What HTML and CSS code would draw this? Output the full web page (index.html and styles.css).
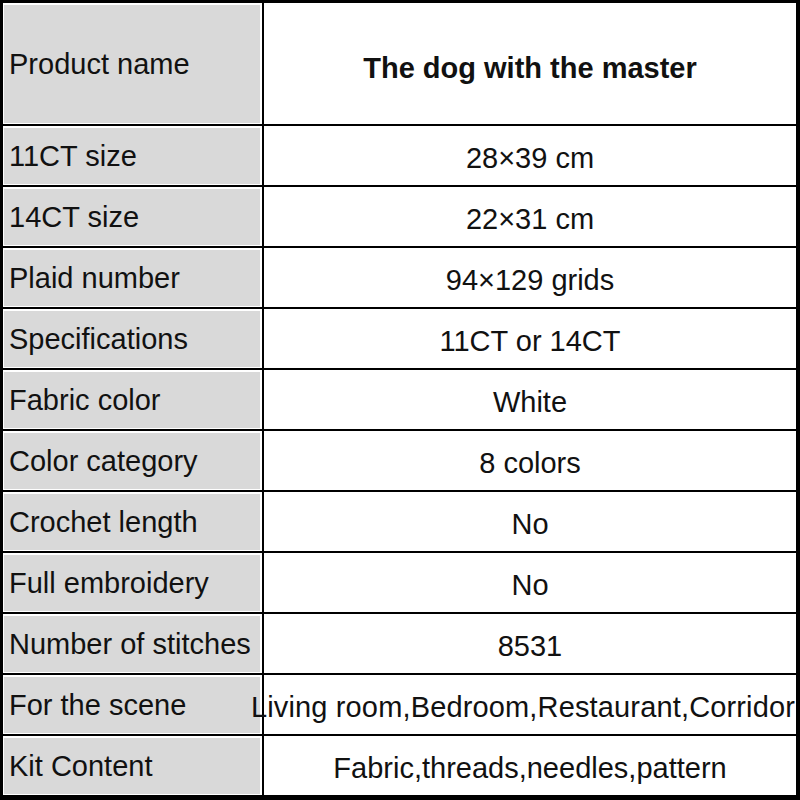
FILE: index.html
```html
<!DOCTYPE html>
<html>
<head>
<meta charset="utf-8">
<link rel="stylesheet" href="styles.css">
</head>
<body>
<div class="table">
  <div class="label">Product name</div><div class="value title">The dog with the master</div>
  <div class="label">11CT size</div><div class="value">28×39 cm</div>
  <div class="label">14CT size</div><div class="value">22×31 cm</div>
  <div class="label">Plaid number</div><div class="value">94×129 grids</div>
  <div class="label">Specifications</div><div class="value">11CT or 14CT</div>
  <div class="label">Fabric color</div><div class="value">White</div>
  <div class="label">Color category</div><div class="value">8 colors</div>
  <div class="label">Crochet length</div><div class="value">No</div>
  <div class="label">Full embroidery</div><div class="value">No</div>
  <div class="label">Number of stitches</div><div class="value">8531</div>
  <div class="label">For the scene</div><div class="value wide"><span class="overflow">Living room,Bedroom,Restaurant,Corridor</span></div>
  <div class="label">Kit Content</div><div class="value">Fabric,threads,needles,pattern</div>
</div>
</body>
</html>
```

FILE: styles.css
```css
html, body {
  margin: 0;
  padding: 0;
  background: #fff;
}

.table {
  box-sizing: border-box;
  width: 800px;
  height: 800px;
  background: #000;
  padding: 3px 4px 5px 3px;
  display: grid;
  grid-template-columns: 259px 532px;
  grid-template-rows: 121px repeat(11, 59px);
  column-gap: 2px;
  row-gap: 2px;
  font-family: "Liberation Sans", Arial, sans-serif;
  font-size: 29px;
  color: #111;
}

.label {
  box-sizing: border-box;
  background: #d9d9d9;
  border: 1px solid #fff;
  border-top-width: 2px;
  border-right-width: 2px;
  padding-left: 5px;
  display: flex;
  align-items: center;
  white-space: nowrap;
  overflow: visible;
}

.value {
  background: #fff;
  display: flex;
  align-items: center;
  justify-content: center;
  padding-top: 5px;
  white-space: nowrap;
  box-sizing: border-box;
}

.title {
  font-weight: bold;
  padding-top: 10px;
}

.wide {
  position: relative;
  z-index: 1;
}

.overflow {
  margin-left: -14px;
  letter-spacing: 0.15px;
}
```
